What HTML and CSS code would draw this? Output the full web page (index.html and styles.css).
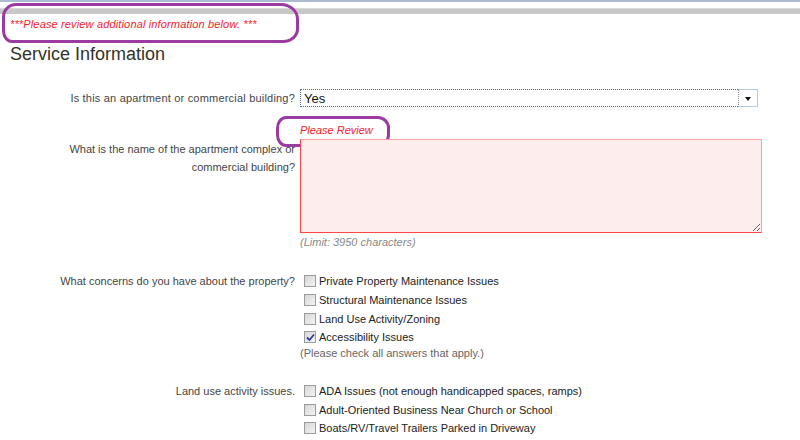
FILE: index.html
```
<!DOCTYPE html>
<html>
<head>
    <title>Service Information</title>
    <link rel="stylesheet" href="styles.css">
</head>
<body>
    <div class="topline"></div>
    <div class="greybar"></div>
    <p class="alert">***Please review additional information below. ***</p>
    <h1>Service Information</h1>

    <div class="form">
        <div class="row row-select">
            <label class="question question-wide">Is this an apartment or commercial building?</label>
            <div class="field">
                <div class="select">
                    <span class="select-value">Yes</span>
                    <span class="select-arrow"></span>
                </div>
            </div>
        </div>

        <div class="row row-text">
            <label class="question question-wrap">What is the name of the apartment complex or commercial building?</label>
            <div class="field">
                <div class="review">Please Review</div>
                <textarea class="error-box"></textarea>
                <div class="hint hint-italic">(Limit: 3950 characters)</div>
            </div>
        </div>

        <div class="row row-checks">
            <label class="question">What concerns do you have about the property?</label>
            <div class="field">
                <div class="option"><span class="box"></span>Private Property Maintenance Issues</div>
                <div class="option"><span class="box"></span>Structural Maintenance Issues</div>
                <div class="option"><span class="box"></span>Land Use Activity/Zoning</div>
                <div class="option"><span class="box checked"><svg width="9" height="9" viewBox="0 0 9 9"><path d="M1 4.5 L3.5 7 L8 1.5" fill="none" stroke="#2b3f9a" stroke-width="1.8"/></svg></span>Accessibility Issues</div>
                <div class="hint">(Please check all answers that apply.)</div>
            </div>
        </div>

        <div class="row row-checks row-last">
            <label class="question">Land use activity issues.</label>
            <div class="field">
                <div class="option"><span class="box"></span>ADA Issues (not enough handicapped spaces, ramps)</div>
                <div class="option"><span class="box"></span>Adult-Oriented Business Near Church or School</div>
                <div class="option"><span class="box"></span>Boats/RV/Travel Trailers Parked in Driveway</div>
            </div>
        </div>
    </div>

    <!-- annotation marks drawn over the page -->
    <div class="ring ring-top"></div>
    <div class="ring ring-review"></div>
</body>
</html>
```

FILE: styles.css
```
body {
    font-family: "Liberation Sans", Arial, sans-serif;
    font-size: 11px;
    color: #444;
    background-color: #fff;
    margin: 0;
    padding: 0;
    position: relative;
    width: 800px;
    height: 440px;
    overflow: hidden;
}
.topline {
    height: 2px;
    background-color: #a9bcd0;
}
.greybar {
    height: 6px;
    margin-top: 6px;
    background-color: #c8c8c8;
    border-top: 1px solid #d8d8d8;
    box-sizing: border-box;
}
.alert {
    margin: 4px 0 0 10px;
    color: #f0232d;
    font-style: italic;
    line-height: 13px;
    letter-spacing: 0.15px;
}
h1 {
    margin: 12px 0 0 10px;
    font-size: 18px;
    line-height: 22px;
    font-weight: normal;
    color: #333326;
}
.form {
    margin-top: 24px;
}
.row {
    display: grid;
    grid-template-columns: 295px 462px;
    column-gap: 5px;
}
.question {
    text-align: right;
    color: #454545;
    line-height: 18px;
}
.question-wide {
    letter-spacing: 0.2px;
}
.question-wrap {
    padding-left: 40px;
    padding-top: 16px;
    position: relative;
    z-index: 0;
}
.select {
    width: 458px;
    height: 18px;
    box-sizing: border-box;
    border: 1px dotted #52708e;
    display: flex;
    align-items: center;
}
.select-value {
    flex: 1;
    padding-left: 3px;
    font-size: 13px;
    color: #111;
}
.select-arrow {
    width: 20px;
    height: 18px;
    margin-right: -1px;
    border-left: 1px dotted #888;
    border-right: 1px solid #b4cde2;
    border-top: 1px solid #b4cde2;
    border-bottom: 1px solid #b4cde2;
    box-sizing: border-box;
    position: relative;
}
.select-arrow::after {
    content: "";
    position: absolute;
    left: 6px;
    top: 7px;
    border-left: 3.5px solid transparent;
    border-right: 3.5px solid transparent;
    border-top: 4px solid #111;
}
.row-text {
    margin-top: 17px;
}
.review {
    color: #f0232d;
    font-style: italic;
    line-height: 13px;
    margin-bottom: 2px;
}
.error-box {
    display: block;
    width: 462px;
    height: 94px;
    box-sizing: border-box;
    margin: 0;
    background-color: #fdeded;
    border: 1px solid #ff4545;
    border-top-color: #f7a3a3;
    border-right-color: #f7a3a3;
    position: relative;
    z-index: 1;
}
.hint {
    color: #666;
    line-height: 13px;
    margin-top: 0;
}
.hint-italic {
    color: #888;
    font-style: italic;
    margin-top: 3px;
}
.row-checks {
    margin-top: 23px;
}
.row-checks .question {
    line-height: 19px;
}
.row-last {
    margin-top: 22px;
}
.option {
    display: flex;
    align-items: center;
    height: 18.7px;
    color: #222;
    padding-left: 4px;
}
.box {
    width: 12px;
    height: 12px;
    box-sizing: border-box;
    border: 1px solid #9c9c9c;
    background: linear-gradient(135deg, #d6d6d6, #f4f4f4);
    margin-right: 3px;
    display: flex;
    align-items: center;
    justify-content: center;
}
.ring {
    position: absolute;
    border: 3px solid #9b3aa0;
    box-sizing: border-box;
}
.ring-top {
    left: 2px;
    top: 3px;
    width: 297px;
    height: 40px;
    border-radius: 14px 18px 16px 10px / 14px 16px 14px 12px;
}
.ring-review {
    left: 276px;
    top: 116px;
    width: 114px;
    height: 31px;
    border-radius: 10px 12px 12px 10px / 12px 12px 12px 12px;
}
```
